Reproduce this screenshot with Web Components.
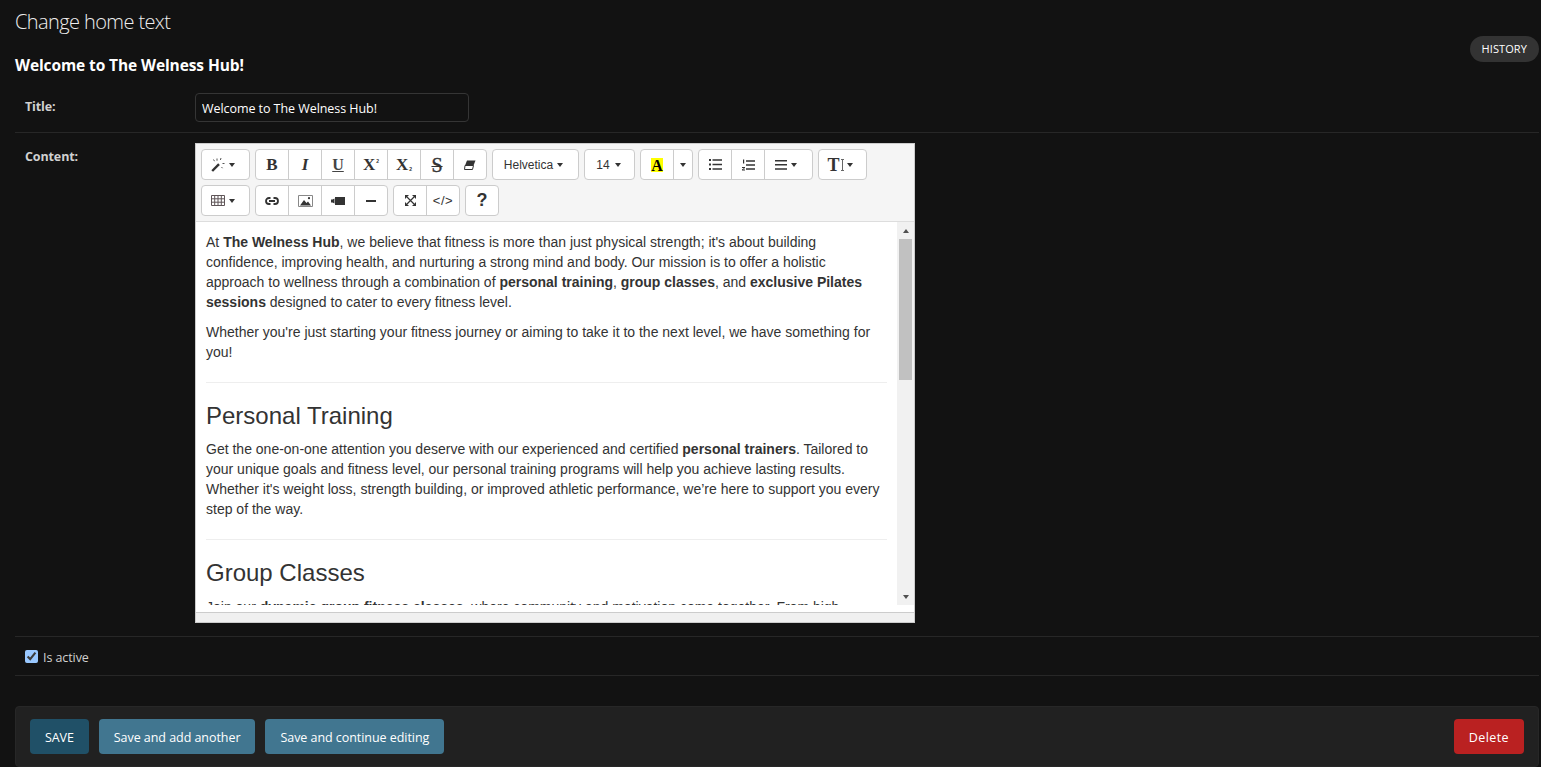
<!DOCTYPE html>
<html>
<head>
<meta charset="utf-8">
<title>Change home text</title>
<style>
    html, body { margin: 0; background: #121212; overflow: hidden; }
    body { font-family: "Open Sans", "Noto Sans", sans-serif; color: #eee; font-size: 13px; }
</style>
</head>
<body>

<admin-change-form>
    <admin-head slot="head" title="Change home text" subtitle="Welcome to The Welness Hub!"></admin-head>

    <form-row label="Title:">
        <text-field value="Welcome to The Welness Hub!"></text-field>
    </form-row>

    <form-row label="Content:" class="content">
        <note-editor>
            <p>At <b>The Welness Hub</b>, we believe that fitness is more than just physical strength; it's about building confidence, improving health, and nurturing a strong mind and body. Our mission is to offer a holistic approach to wellness through a combination of <b>personal training</b>, <b>group classes</b>, and <b>exclusive Pilates sessions</b> designed to cater to every fitness level.</p>
            <p>Whether you're just starting your fitness journey or aiming to take it to the next level, we have something for you!</p>
            <hr>
            <h2>Personal Training</h2>
            <p>Get the one-on-one attention you deserve with our experienced and certified <b>personal trainers</b>. Tailored to your unique goals and fitness level, our personal training programs will help you achieve lasting results. Whether it's weight loss, strength building, or improved athletic performance, we’re here to support you every step of the way.</p>
            <hr>
            <h2>Group Classes</h2>
            <p>Join our <b>dynamic group fitness classes</b>, where community and motivation come together. From high</p>
        </note-editor>
    </form-row>

    <check-row label="Is active"></check-row>

    <submit-row>
        <action-button kind="default">SAVE</action-button>
        <action-button>Save and add another</action-button>
        <action-button>Save and continue editing</action-button>
        <action-button kind="delete" slot="end">Delete</action-button>
    </submit-row>
</admin-change-form>

<script>
(function () {
    // page shell
    class AdminChangeForm extends HTMLElement {
        constructor() {
            super();
            this.attachShadow({ mode: "open" }).innerHTML = `
                <style>
                    :host { display: block; padding: 0 2px 0 15px; }
                </style>
                <slot name="head"></slot>
                <slot></slot>`;
        }
    }
    customElements.define('admin-change-form', AdminChangeForm);

    class AdminHead extends HTMLElement {
        constructor() {
            super();
            this.attachShadow({ mode: "open" }).innerHTML = `
                <style>
                    :host { display: flex; justify-content: space-between; height: 83px; }
                    h1 { margin: 0; padding-top: 9px; font: 300 20px/26px "Open Sans", sans-serif; color: #eee; letter-spacing: -0.6px; }
                    h2 { margin: 19px 0 0; font: 700 15.5px/22px "Open Sans", sans-serif; color: #fff; letter-spacing: -0.1px; }
                    .history { margin-top: 36px; height: 26px; box-sizing: border-box; padding: 0 12px; background: #333; color: #fff;
                        border-radius: 15px; font: 400 11px/26px "Open Sans", sans-serif; letter-spacing: 0.1px; }
                </style>
                <div>
                    <h1>${this.getAttribute('title')}</h1>
                    <h2>${this.getAttribute('subtitle')}</h2>
                </div>
                <div class="history">HISTORY</div>`;
            this.removeAttribute('title');
        }
    }
    customElements.define('admin-head', AdminHead);

    class FormRow extends HTMLElement {
        constructor() {
            super();
            this.attachShadow({ mode: "open" }).innerHTML = `
                <style>
                    :host { display: flex; padding: 10px; border-bottom: 1px solid #272727; }
                    :host(.content) { padding-bottom: 13px; }
                    label { width: 170px; flex: none; padding-top: 5px; box-sizing: border-box; font-weight: 700; font-size: 12.5px; line-height: 18px; color: #d0d0d0; letter-spacing: -0.12px; }
                </style>
                <label>${this.getAttribute('label')}</label>
                <slot></slot>`;
        }
    }
    customElements.define('form-row', FormRow);

    class TextField extends HTMLElement {
        constructor() {
            super();
            this.attachShadow({ mode: "open" }).innerHTML = `
                <style>
                    :host { display: block; }
                    input { display: block; width: 274px; height: 29px; box-sizing: border-box; padding: 3px 6px 1px; margin: 0;
                        background: #121212; color: #fff; border: 1px solid #353535; border-radius: 4px; outline: 0;
                        font: 400 12.5px "Open Sans", sans-serif; letter-spacing: -0.06px; }
                </style>
                <input type="text" value="${this.getAttribute('value')}">`;
        }
    }
    customElements.define('text-field', TextField);

    class CheckRow extends HTMLElement {
        constructor() {
            super();
            this.attachShadow({ mode: "open" }).innerHTML = `
                <style>
                    :host { display: flex; align-items: center; height: 38px; padding: 0 10px; border-bottom: 1px solid #272727; color-scheme: dark; }
                    input { width: 13px; height: 13px; margin: 0 5px 0 0; }
                    label { padding-top: 2px; font-size: 12.5px; color: #d0d0d0; letter-spacing: -0.08px; }
                </style>
                <input type="checkbox" checked>
                <label>${this.getAttribute('label')}</label>`;
        }
    }
    customElements.define('check-row', CheckRow);

    class SubmitRow extends HTMLElement {
        constructor() {
            super();
            this.attachShadow({ mode: "open" }).innerHTML = `
                <style>
                    :host { display: flex; gap: 10px; margin-top: 30px; padding: 12px 14px; background: #212121;
                        border: 1px solid #272727; border-radius: 4px; }
                    .end { margin-left: auto; display: flex; }
                </style>
                <slot></slot>
                <div class="end"><slot name="end"></slot></div>`;
        }
    }
    customElements.define('submit-row', SubmitRow);

    class ActionButton extends HTMLElement {
        constructor() {
            super();
            this.attachShadow({ mode: "open" }).innerHTML = `
                <style>
                    :host { display: block; height: 35px; padding: 0 15px; background: #417690; color: #fff; border-radius: 4px;
                        font-size: 12.5px; line-height: 37px; letter-spacing: -0.05px; }
                    :host([kind="default"]) { background: #205067; letter-spacing: -0.1px; }
                    :host([kind="delete"]) { background: #ba2121; letter-spacing: 0.4px; }
                </style>
                <slot></slot>`;
        }
    }
    customElements.define('action-button', ActionButton);

    // summernote style editor
    class NoteGroup extends HTMLElement {
        constructor() {
            super();
            this.attachShadow({ mode: "open" }).innerHTML = `
                <style>
                    :host { display: flex; height: 31px; box-sizing: border-box; background: #fff; border: 1px solid #ccc; border-radius: 4px; overflow: hidden; }
                </style>
                <slot></slot>`;
        }
    }
    customElements.define('note-group', NoteGroup);

    class NoteBtn extends HTMLElement {
        constructor() {
            super();
            let caret = this.hasAttribute('caret') ? '<i></i>' : '';
            this.attachShadow({ mode: "open" }).innerHTML = `
                <style>
                    :host { display: flex; align-items: center; justify-content: center; gap: var(--gap, 4px); box-sizing: content-box; width: 32px; height: 29px;
                        color: #333; font: 400 12px "Liberation Sans", Arial, sans-serif; }
                    :host(:not(:first-child)) { border-left: 1px solid #ccc; }
                    i { width: 0; height: 0; border: solid transparent; border-width: 4px 3.5px 0; border-top-color: #333; }
                </style>
                <slot></slot>${caret}`;
        }
    }
    customElements.define('note-btn', NoteBtn);

    class NoteToolbar extends HTMLElement {
        constructor() {
            super();
            this.attachShadow({ mode: "open" }).innerHTML = `
                <style>
                    :host { display: block; height: 78px; box-sizing: border-box; padding: 5px; background: #f5f5f5; border-bottom: 1px solid #ddd; color: #333; }
                    .row { display: flex; gap: 5px; margin-bottom: 5px; }
                    svg { display: block; }
                    .w18 { width: 18px; }
                    .drop { width: 42px; padding-right: 5px; }
                    .hv { width: 81px; padding-right: 4px; }
                    .sz { width: 47px; padding-right: 2px; }
                    .g { font-family: "Liberation Serif", serif; font-weight: 700; font-size: 17px; line-height: 1; color: #333; }
                    .s { font-size: 20px; font-weight: 400; color: #333; -webkit-text-stroke: 0.4px #333; text-decoration: line-through; text-decoration-thickness: 1px; }
                    .u { text-decoration: underline; text-decoration-thickness: 1px; text-underline-offset: 1px; }
                    .tiny { font: 700 5px "Liberation Sans", sans-serif; margin-left: 1px; }
                    .up { margin-top: -8px; }
                    .hi { display: block; width: 12px; height: 14px; background: #ff0; color: #000; font: 700 16px/15px "Liberation Serif", serif; text-align: center; }
                    .code { font: 400 13px "Liberation Sans", sans-serif; letter-spacing: 0.5px; color: #333; }
                    .q { font: 700 18px "Liberation Sans", sans-serif; color: #333; }
                </style>
                <div class="row">
                    <note-group>
                        <note-btn class="drop" caret>
                            <svg width="14" height="14" viewBox="0 0 14 14"><path d="M1.200 13 8 6.200" stroke="#333" stroke-width="2.400" fill="none"/><path d="M6 .5v2.200M10 0l-.6 2M2.500 1.500l1 1.700M11.500 5.500h2M10.500 9l1 1.200" stroke="#555" stroke-width="1" fill="none"/></svg>
                        </note-btn>
                    </note-group>
                    <note-group>
                        <note-btn><span class="g">B</span></note-btn>
                        <note-btn><span class="g" style="font-style:italic">I</span></note-btn>
                        <note-btn><span class="g u" style="font-size:16px;color:#444">U</span></note-btn>
                        <note-btn style="--gap:0"><span class="g">X</span><span class="tiny up">2</span></note-btn>
                        <note-btn style="--gap:0"><span class="g">X</span><span class="tiny" style="margin-top:9px">2</span></note-btn>
                        <note-btn><span class="g s">S</span></note-btn>
                        <note-btn>
                            <svg width="12" height="10" viewBox="0 0 12 10"><path d="M3 .5h8.500L9.500 5.500H1z" fill="#333"/><path d="M1 5.500h8.500L8.500 9.500H.5z" fill="#fff" stroke="#333"/></svg>
                        </note-btn>
                    </note-group>
                    <note-group><note-btn class="hv" caret>Helvetica</note-btn></note-group>
                    <note-group><note-btn class="sz" caret style="--gap:5px">14</note-btn></note-group>
                    <note-group>
                        <note-btn><span class="hi">A</span></note-btn>
                        <note-btn class="w18" caret></note-btn>
                    </note-group>
                    <note-group>
                        <note-btn>
                            <svg width="13" height="11" viewBox="0 0 13 11"><path d="M0 0h2v2H0zM0 4.500h2v2H0zM0 9h2v2H0zM3.500 .2H13v1.600H3.500zM3.500 4.700H13v1.600H3.500zM3.500 9.200H13v1.600H3.500z" fill="#333"/></svg>
                        </note-btn>
                        <note-btn>
                            <svg width="13" height="12" viewBox="0 0 13 12"><path d="M1 .5h1.200v4H1zM0 8h3v1L1 10.500h2v1H0v-1L2 9H0zM4 1.200h9v1.600H4zM4 5.200h9v1.600H4zM4 9.200h9v1.600H4z" fill="#333"/></svg>
                        </note-btn>
                        <note-btn class="drop" caret>
                            <svg width="12" height="10" viewBox="0 0 12 10"><path d="M0 0h12v1.500H0zM0 4h12v1.500H0zM0 8.200h12v1.500H0z" fill="#333"/></svg>
                        </note-btn>
                    </note-group>
                    <note-group>
                        <note-btn class="drop" caret style="--gap:3px">
                            <span class="g" style="font-size:18px;margin-right:-2px">T</span>
                            <svg width="3" height="12" viewBox="0 0 3 12"><path d="M0 .5h3M0 11.500h3M1.500 .5v11" stroke="#666" fill="none"/></svg>
                        </note-btn>
                    </note-group>
                </div>
                <div class="row">
                    <note-group>
                        <note-btn class="drop" caret>
                            <svg width="14" height="11" viewBox="0 0 14 11"><path d="M.5.5h13v10H.5zM.5 3.800h13M.5 7.200h13M3.700.5v10M7 .5v10M10.300.5v10" stroke="#5f5558" fill="none"/></svg>
                        </note-btn>
                    </note-group>
                    <note-group>
                        <note-btn>
                            <svg width="14" height="8" viewBox="0 0 14 8"><path d="M5.500 1H4a3 3 0 0 0 0 6h1.500M8.500 1H10a3 3 0 0 1 0 6H8.500M4 4h6" stroke="#333" stroke-width="1.800" fill="none"/></svg>
                        </note-btn>
                        <note-btn>
                            <svg width="15" height="12" viewBox="0 0 15 12"><path d="M.5.5h14v11H.5z" fill="#fff" stroke="#888"/><path d="M2 10.500 6 5l2.500 3L10 6.500l3 4z" fill="#333"/><circle cx="11" cy="3.200" r="1.100" fill="#333"/></svg>
                        </note-btn>
                        <note-btn>
                            <svg width="14" height="8" viewBox="0 0 14 8"><path d="M4 0h10v8H4zM0 2.500h1.500L3.500 1.500v5L1.500 5.500H0z" fill="#333"/></svg>
                        </note-btn>
                        <note-btn>
                            <svg width="10" height="2" viewBox="0 0 10 2"><path d="M0 0h10v2H0z" fill="#333"/></svg>
                        </note-btn>
                    </note-group>
                    <note-group>
                        <note-btn>
                            <svg width="11" height="11" viewBox="0 0 11 11"><path d="M2 2l7 7M9 2 2 9" stroke="#333" stroke-width="1.200" fill="none"/><path d="M0 0h4L0 4zM11 0H7l4 4zM0 11h4L0 7zM11 11H7l4-4z" fill="#333"/></svg>
                        </note-btn>
                        <note-btn><span class="code">&lt;/&gt;</span></note-btn>
                    </note-group>
                    <note-group><note-btn><span class="q">?</span></note-btn></note-group>
                </div>`;
        }
    }
    customElements.define('note-toolbar', NoteToolbar);

    class NoteScrollbar extends HTMLElement {
        constructor() {
            super();
            this.attachShadow({ mode: "open" }).innerHTML = `
                <style>
                    :host { display: flex; flex-direction: column; align-items: center; width: 17px; flex: none; background: #f1f1f1; }
                    .btn { height: 17px; flex: none; display: flex; align-items: center; justify-content: center; }
                    .a { width: 0; height: 0; border: solid transparent; border-width: 0 3.5px 4px; border-bottom-color: #505050; }
                    .a.d { border-width: 4px 3.5px 0; border-top-color: #505050; border-bottom-color: transparent; }
                    .thumb { width: 13px; height: 141px; flex: none; background: #c1c1c1; }
                    .fill { flex: 1; }
                </style>
                <div class="btn"><div class="a"></div></div>
                <div class="thumb"></div>
                <div class="fill"></div>
                <div class="btn"><div class="a d"></div></div>`;
        }
    }
    customElements.define('note-scrollbar', NoteScrollbar);

    class NoteEditor extends HTMLElement {
        constructor() {
            super();
            this.attachShadow({ mode: "open" }).innerHTML = `
                <style>
                    :host { display: block; width: 720px; height: 480px; box-sizing: border-box; border: 1px solid #ccc; background: #fff; color: #333;
                        font: 400 14px/20px "Liberation Sans", Arial, sans-serif; }
                    .body { height: 390px; border-bottom: 1px solid #ccc; }
                    .view { display: flex; height: 383px; }
                    .editable { flex: 1; overflow: hidden; padding: 10px; }
                    ::slotted(p) { margin: 0 0 10px; }
                    ::slotted(hr) { margin: 20px 0; border: 0; border-top: 1px solid #eee; }
                    ::slotted(h2) { margin: 0 0 10px; font: 500 24px/26.4px "Liberation Sans", Arial, sans-serif; color: #333; }
                    .status { height: 9px; background: #f0f0f0; }
                </style>
                <note-toolbar></note-toolbar>
                <div class="body">
                    <div class="view">
                        <div class="editable"><slot></slot></div>
                        <note-scrollbar></note-scrollbar>
                    </div>
                </div>
                <div class="status"></div>`;
        }
    }
    customElements.define('note-editor', NoteEditor);
})();
</script>
</body>
</html>
